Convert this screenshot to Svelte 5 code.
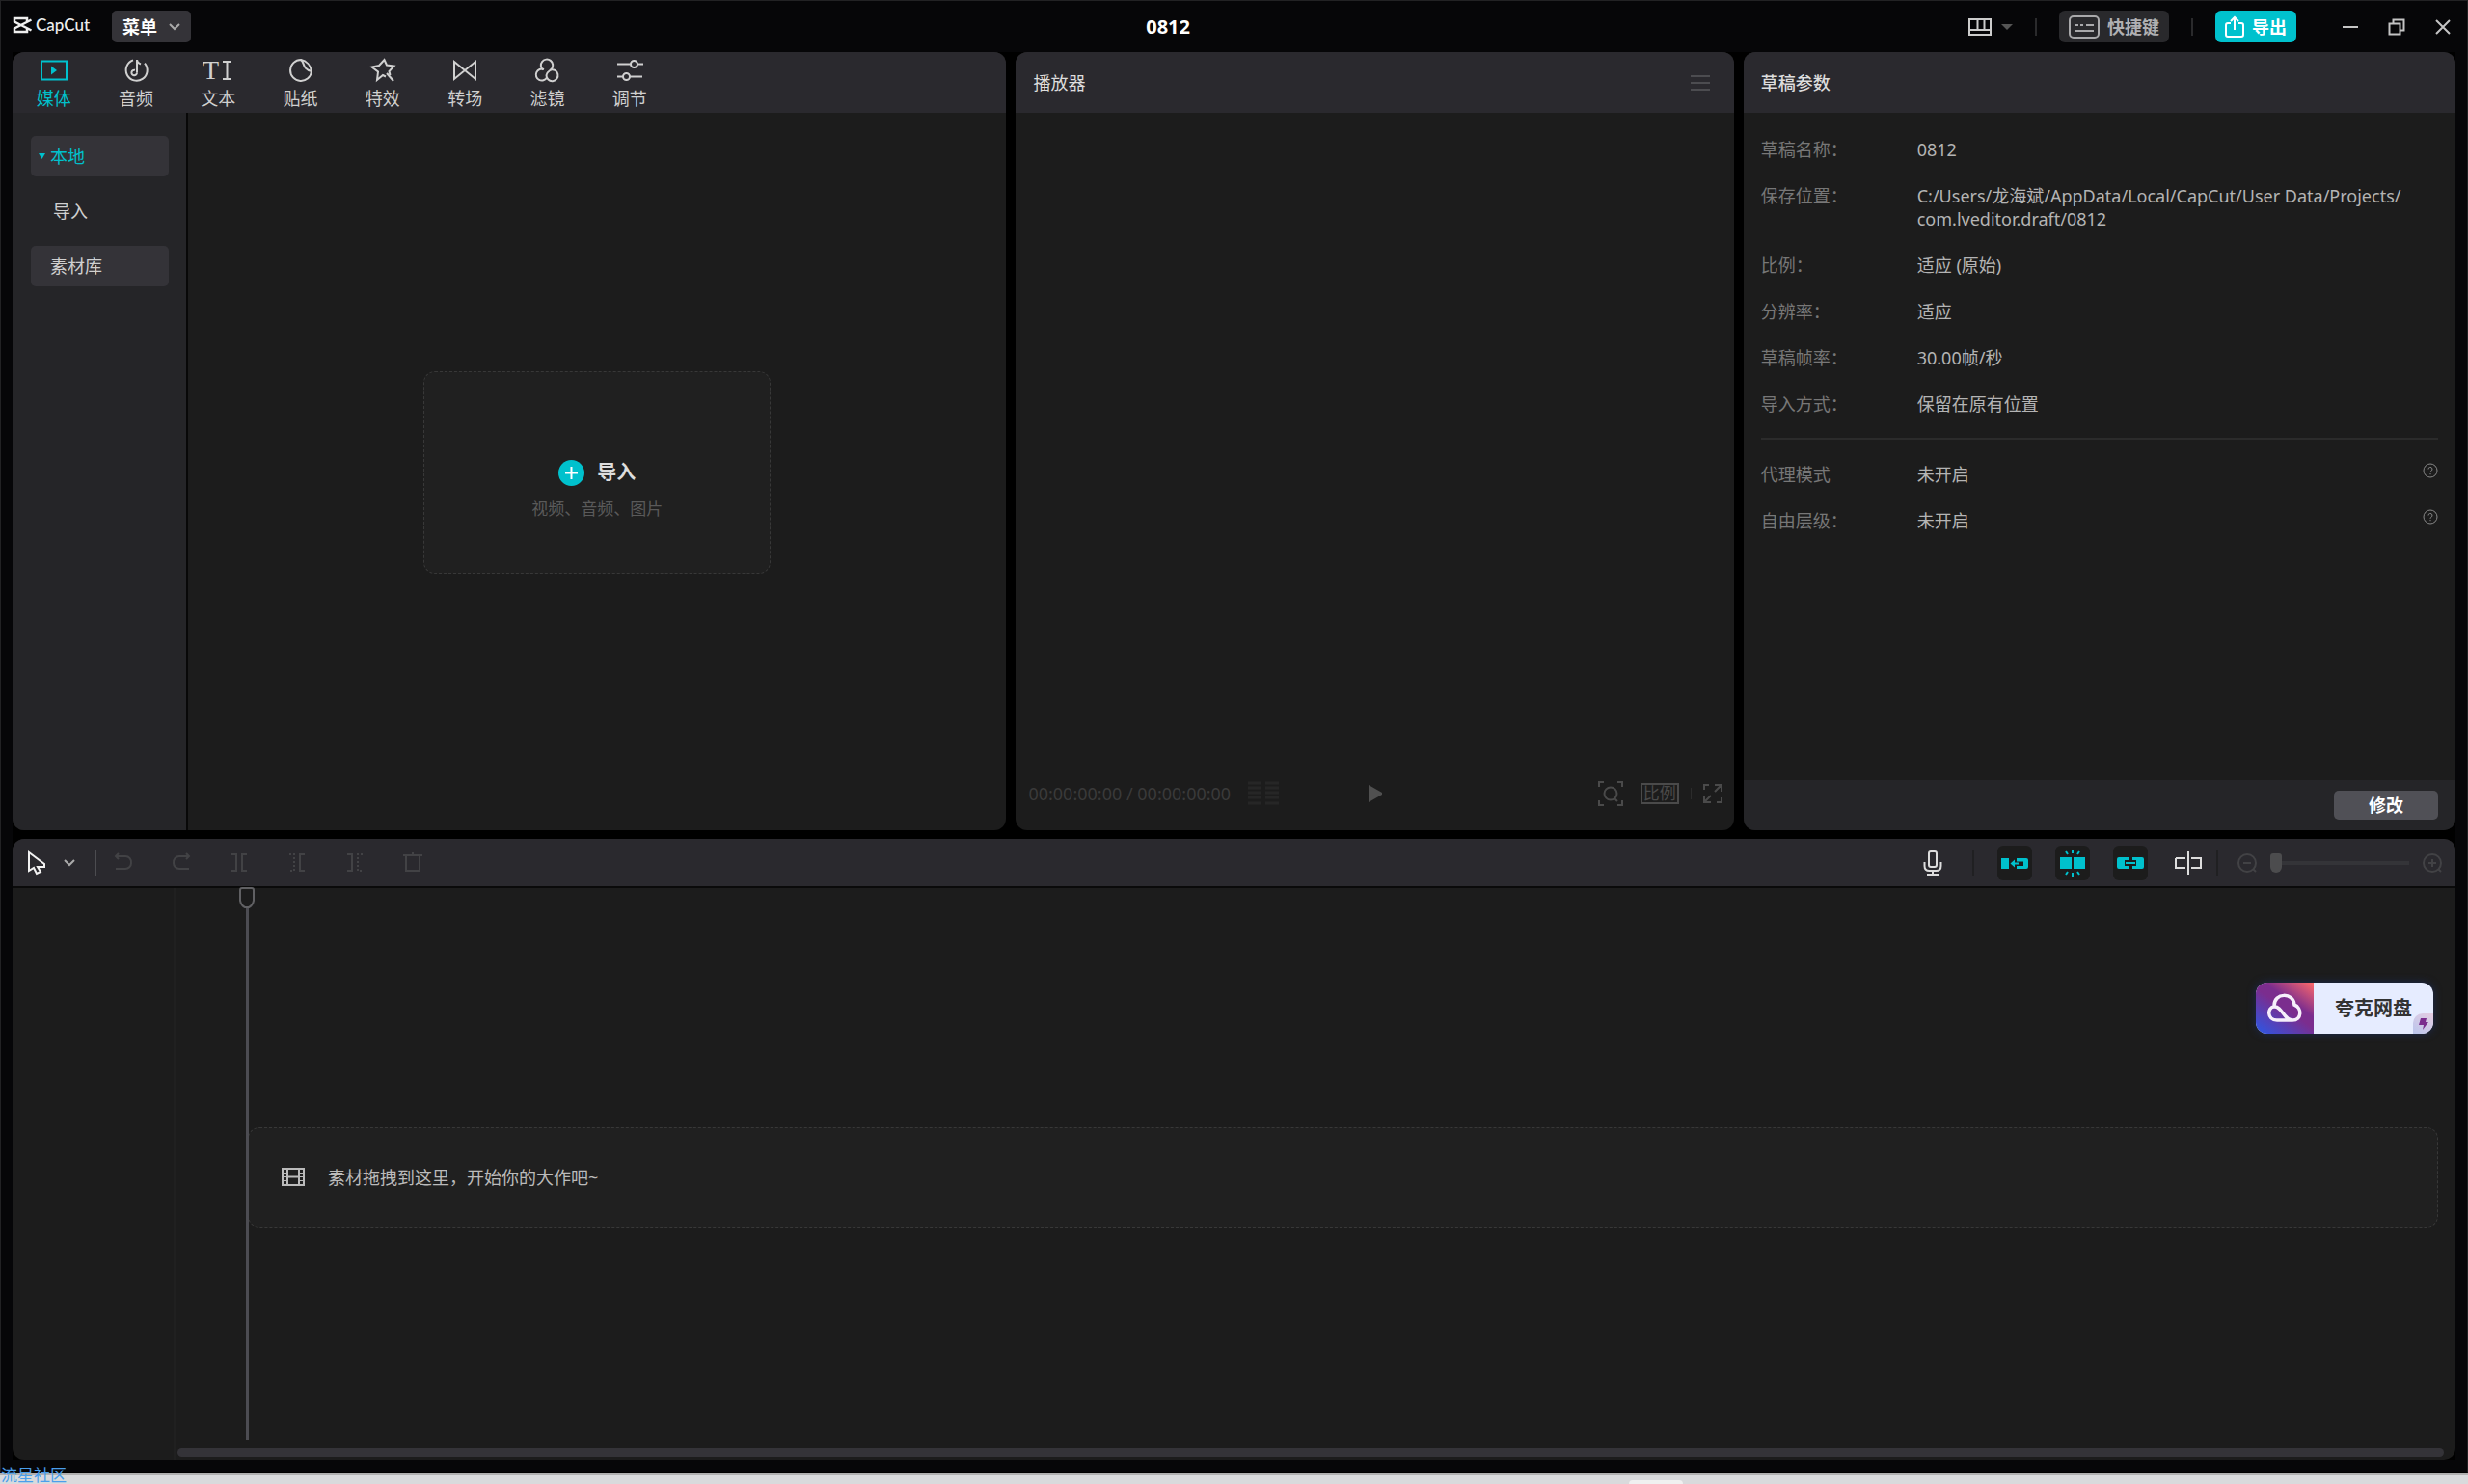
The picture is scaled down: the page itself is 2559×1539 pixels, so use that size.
<script lang="ts">
  let activeTab = $state("媒体");
  let zoom = $state(0);

  const tabs = [
    {name: "媒体", paths: ["M1 2.5h26v19H1z"], fill: "M11 7.5l6 4.5-6 4.5z"},
    {name: "音频", paths: ["M11 1.4A11 11 0 1 0 23 4.6", "M15 14.6V1c0 3 1.5 3.5 4 4.5", "M15 14.5a2.8 2.8 0 1 1-2-2.7"]},
    {name: "文本", paths: ["M21 3h9M21 21h9M25.5 3v18"]},
    {name: "贴纸", paths: ["M14 1A11 11 0 1 0 25 13C24 7 20 2 14 1z", "M14 1c4 2 1 10 11 12"]},
    {name: "特效", paths: ["M17 18.5l-3-1.5-6 5 1-8.500-6.500-5 7.500-1.500L15.500 1l2.500 5.500 7.500 1-5 5.500 1 4", "M18 15l7 8"]},
    {name: "转场", paths: ["M3 3l22 18V3L3 21z"]},
    {name: "滤镜", paths: ["M10 11.500a6.200 6.200 0 1 1 9-1c-1.500 2-5 2.500-5.500 6.500", "M11 11a6 6 0 1 0 3 8.500M17.500 11.500a6 6 0 1 1-4 5.500"]},
    {name: "调节", paths: ["M1 5.500h14M22 5.500h6M1 18.500h6M14 18.500h13", "M15 5.500a3.500 3.500 0 1 0 7 0 3.500 3.500 0 1 0-7 0M7 18.500a3.500 3.500 0 1 0 7 0 3.500 3.500 0 1 0-7 0"]}
  ];

  const params = [
    {label: "草稿名称：", value: "0812"},
    {label: "保存位置：", value: "C:/Users/龙海斌/AppData/Local/CapCut/User Data/Projects/\ncom.lveditor.draft/0812"},
    {label: "比例：", value: "适应 (原始)"},
    {label: "分辨率：", value: "适应"},
    {label: "草稿帧率：", value: "30.00帧/秒"},
    {label: "导入方式：", value: "保留在原有位置"}
  ];

  const modes = [
    {label: "代理模式", value: "未开启"},
    {label: "自由层级：", value: "未开启"}
  ];

  const tools = [
    {name: "撤销", d: "M5 1L2 4l3 3M2 4h10a6 6 0 0 1 6 7 6 6 0 0 1-6 6H2"},
    {name: "恢复", d: "M15 1l3 3-3 3M18 4H8a6 6 0 0 0-6 7 6 6 0 0 0 6 6h10"},
    {name: "分割", d: "M2 2h5v17H2M18 2h-5v17h5"},
    {name: "向左裁剪", d: "M18 2h-5v17h5", dash: "M2 2h5v17H2"},
    {name: "向右裁剪", d: "M2 2h5v17H2", dash: "M18 2h-5v17h5"},
    {name: "删除", d: "M0 3h20M10 0v3M3 3v16h14V3"}
  ];
</script>

<div class="window">
  <header class="titlebar">
    <div class="brand">
      <svg width="20" height="18" viewBox="0 0 20 18" fill="none" stroke="#eee" stroke-width="2.500">
        <path d="M15 5V2H2v3.500l17.500 9M15 13v3H2v-3.500l17.500-9"/>
      </svg>
      <span>CapCut</span>
    </div>
    <button class="menu">
      菜单
      <svg width="12" height="8" viewBox="0 0 12 8" fill="none" stroke="#aaa" stroke-width="2"><path d="M1 1l5 5 5-5"/></svg>
    </button>
    <h1>0812</h1>
    <button class="plain layout" aria-label="布局">
      <svg width="24" height="18" viewBox="0 0 24 18" fill="none" stroke="#ccc" stroke-width="2"><path d="M1 1h22v16H1zM1 12h22M9.500 1v11M16.500 1v11"/></svg>
      <svg width="12" height="6" viewBox="0 0 12 6" fill="#555"><path d="M0 0h12L6 6z"/></svg>
    </button>
    <i class="bar-sep"></i>
    <button class="hotkeys">
      <svg width="32" height="24" viewBox="0 0 32 24" fill="none" stroke="#a9a9ab" stroke-width="2"><rect x="1" y="1" width="30" height="22" rx="4"/><path d="M6 10h4M12 10h3M18 10h8M6 16h20"/></svg>
      快捷键
    </button>
    <i class="bar-sep"></i>
    <button class="export">
      <svg width="20" height="22" viewBox="0 0 20 22" fill="none" stroke="#fff" stroke-width="2"><path d="M6 7H3a2 2 0 0 0-2 2v10a2 2 0 0 0 2 2h14a2 2 0 0 0 2-2V9a2 2 0 0 0-2-2h-3M10 14V2M6 5l4-4 4 4"/></svg>
      导出
    </button>
    <div class="win-buttons">
      <button class="plain" aria-label="最小化"><svg width="18" height="18" viewBox="0 0 18 18"><path d="M1 9h16"/></svg></button>
      <button class="plain" aria-label="还原"><svg width="18" height="18" viewBox="0 0 18 18"><path d="M1.500 5.500h11v11h-11zM5.500 5V1.500h11v11H13"/></svg></button>
      <button class="plain" aria-label="关闭"><svg width="18" height="18" viewBox="0 0 18 18"><path d="M2 2l14 14M16 2L2 16"/></svg></button>
    </div>
  </header>

  <main>
    <div class="top">
      <section class="panel">
        <nav class="panel-head tabs">
          {#each tabs as tab}
            <button class="tab" class:active={tab.name === activeTab} onclick={() => activeTab = tab.name}>
              <svg width={tab.name === "文本" ? 32 : 28} height="24" viewBox={tab.name === "文本" ? "0 0 32 24" : "0 0 28 24"}>
                {#if tab.name === "文本"}
                  <text x="0" y="21">T</text>
                {/if}
                {#each tab.paths as d}
                  <path {d}/>
                {/each}
                {#if tab.fill}
                  <path class="solid" d={tab.fill}/>
                {/if}
              </svg>
              {tab.name}
            </button>
          {/each}
        </nav>
        <div class="library">
          <aside>
            <button class="side active">
              <svg width="7" height="6" viewBox="0 0 7 6" fill="#00c1cd"><path d="M0 0h7L3.500 6z"/></svg>
              本地
            </button>
            <button class="side child">导入</button>
            <button class="side">素材库</button>
          </aside>
          <div class="media">
            <button class="import">
              <span class="import-title">
                <svg width="27" height="27" viewBox="0 0 27 27" fill="none" stroke="#fff" stroke-width="2"><circle cx="13.500" cy="13.500" r="13.500" fill="#00c1cd" stroke="none"/><path d="M7 13.500h13M13.500 7v13"/></svg>
                导入
              </span>
              <span class="import-hint">视频、音频、图片</span>
            </button>
          </div>
        </div>
      </section>

      <section class="panel player">
        <div class="panel-head">
          <h2>播放器</h2>
          <button class="plain" aria-label="播放器菜单">
            <svg width="20" height="18" viewBox="0 0 20 18" stroke="#4c4c50" stroke-width="2"><path d="M0 2h20M0 9h20M0 16h20"/></svg>
          </button>
        </div>
        <div class="screen"></div>
        <div class="controls">
          <div class="time">
            <span>00:00:00:00 / 00:00:00:00</span>
            <svg width="32" height="26" viewBox="0 0 32 26" stroke="#262626" stroke-width="3"><path d="M0 2h14M0 7h14M0 12h14M0 17h14M0 23h14M18 2h14M18 7h14M18 12h14M18 17h14M18 23h14"/></svg>
          </div>
          <button class="plain" aria-label="播放">
            <svg width="16" height="18" viewBox="0 0 16 18" fill="#505050"><path d="M1 0l14 8v2L1 18z"/></svg>
          </button>
          <div class="view">
            <button class="plain" aria-label="缩放">
              <svg width="26" height="26" viewBox="0 0 26 26" fill="none" stroke="#4a4a4a" stroke-width="2"><path d="M1 6V1h5M20 1h5v5M25 20v5h-5M6 25H1v-5M17 18l3 3"/><circle cx="13" cy="13" r="6.500"/></svg>
            </button>
            <button class="ratio">比例</button>
            <i></i>
            <button class="plain" aria-label="全屏">
              <svg width="20" height="20" viewBox="0 0 20 20" fill="none" stroke="#4a4a4a" stroke-width="2"><path d="M1 6V1h5M12 1h7v7M19 14v5h-5M8 19H1v-7M18 2l-6 6M2 18l6-6"/></svg>
            </button>
          </div>
        </div>
      </section>

      <section class="panel">
        <div class="panel-head"><h2 class="strong">草稿参数</h2></div>
        <div class="params">
          <dl>
            {#each params as row}
              <div class="row"><dt>{row.label}</dt><dd>{row.value}</dd></div>
            {/each}
          </dl>
          <dl class="modes">
            {#each modes as row}
              <div class="row">
                <dt>{row.label}</dt><dd>{row.value}</dd>
                <button class="plain help" aria-label="帮助">
                  <svg width="16" height="16" viewBox="0 0 16 16" fill="none" stroke="#888"><circle cx="8" cy="8" r="7"/><path d="M6 6.500a2 2 0 1 1 2.800 1.800Q8 8.700 8 9.800M8 11v1.200"/></svg>
                </button>
              </div>
            {/each}
          </dl>
        </div>
        <footer><button class="edit">修改</button></footer>
      </section>
    </div>

    <section class="panel timeline">
      <div class="toolbar">
        <button class="plain pointer" aria-label="选择">
          <svg width="20" height="26" viewBox="0 0 20 26" fill="none" stroke="#f2f2f2" stroke-width="2"><path d="M2 2v19l5-3 3 6 4-2-3-5h7v-3z"/></svg>
          <svg width="12" height="8" viewBox="0 0 12 8" fill="none" stroke="#aaa" stroke-width="2"><path d="M1 1l5 5 5-5"/></svg>
        </button>
        <i class="light"></i>
        {#each tools as tool}
          <button class="plain tool" aria-label={tool.name} disabled>
            <svg width="20" height="21" viewBox="0 0 20 21" fill="none" stroke="#424245" stroke-width="2">
              <path d={tool.d}/>
              {#if tool.dash}<path d={tool.dash} stroke-dasharray="2 2"/>{/if}
            </svg>
          </button>
        {/each}
        <div class="right-tools">
          <button class="plain mic" aria-label="录音">
            <svg width="20" height="26" viewBox="0 0 20 26" fill="none" stroke="#ddd" stroke-width="2"><rect x="6" y="1" width="8" height="16" rx="2"/><path d="M1.500 12v4q0 5 5 5h7q5 0 5-5v-4M10 21v4M4 25h12"/></svg>
          </button>
          <i></i>
          <div class="toggles">
            <button class="toggle" aria-label="主轨磁吸">
              <svg width="28" height="12" viewBox="0 0 28 12" fill="#00c1cd"><path d="M0 1h8v11H0zM16 1h10q2 0 2 2v7q0 2-2 2H16V9h7V4.500h-7zM14 2.500v8L9.500 6.500z"/><path d="M14 5.500h4v2h-4z"/></svg>
            </button>
            <button class="toggle" aria-label="自动吸附">
              <svg width="28" height="30" viewBox="0 0 28 30" fill="#00c1cd"><path d="M1 9h12v12H1zM15 9h12v12H15z"/><path d="M14 1v4M14 25v4M7 3l2 3M21 3l-2 3M7 27l2-3M21 27l-2-3" stroke="#00c1cd" stroke-width="2"/></svg>
            </button>
            <button class="toggle" aria-label="联动">
              <svg width="28" height="12" viewBox="0 0 28 12" fill="#00c1cd"><path d="M2 0h10v3H8v6h4v3H2q-2 0-2-2V2q0-2 2-2zM26 0H16v3h4v6h-4v3h10q2 0 2-2V2q0-2-2-2z"/><path d="M9 5h10v2H9z"/></svg>
            </button>
          </div>
          <button class="plain" aria-label="预览轴">
            <svg width="28" height="24" viewBox="0 0 28 24" fill="none" stroke="#ddd" stroke-width="2"><path d="M14 0v24M1 7h10M11 17H1V7M17 7h10v10H17"/></svg>
          </button>
          <i></i>
          <div class="zoom">
            <button class="plain" aria-label="缩小"><svg width="20" height="20" viewBox="0 0 20 20" fill="none" stroke="#424245" stroke-width="2"><circle cx="10" cy="10" r="9"/><path d="M6 10h8M16 16l3 3"/></svg></button>
            <input type="range" min="0" max="100" bind:value={zoom} aria-label="时间线缩放"/>
            <button class="plain" aria-label="放大"><svg width="20" height="20" viewBox="0 0 20 20" fill="none" stroke="#424245" stroke-width="2"><circle cx="10" cy="10" r="9"/><path d="M6 10h8M10 6v8M16 16l3 3"/></svg></button>
          </div>
        </div>
      </div>
      <div class="tracks">
        <div class="playhead">
          <svg width="16" height="22" viewBox="0 0 16 22" fill="#1c1c1c" stroke="#606063" stroke-width="2"><path d="M1 2q0-2 2-2h10q2 0 2 2v11q-1 5-5 7H6q-4-2-5-7z"/></svg>
        </div>
        <div class="dropzone">
          <svg width="24" height="19" viewBox="0 0 24 19" fill="none" stroke="#bbb" stroke-width="2"><path d="M1 1h22v17H1zM6 1v17M18 1v17M6 9.500h12"/><path d="M1 5.500h5M1 9.500h5M1 13.500h5M18 5.500h5M18 9.500h5M18 13.500h5" stroke-width="1"/></svg>
          素材拖拽到这里，开始你的大作吧~
        </div>
        <div class="scrollbar"></div>
        <button class="quark">
          <span class="quark-logo">
            <svg width="36" height="29" viewBox="0 0 36 29" fill="none" stroke="#f6effa" stroke-width="3.500"><path d="M7 12C7-2 27-2 28 11c8 3 8 16-2 16H10C-1 27 0 13 7 13c8-1 10 14 19 14"/></svg>
          </span>
          <span class="quark-name">夸克网盘</span>
          <span class="quark-badge">
            <svg width="10" height="12" viewBox="0 0 10 12" fill="#7b2d8e"><path d="M2 0h6L7 4h3L4 12l1-5H0z"/></svg>
          </span>
        </button>
      </div>
    </section>
  </main>
</div>
<div class="desktop">
  <div class="taskbar"></div>
  <span class="watermark">流星社区</span>
</div>

<style>
  :global(body) {
    margin: 0;
    background: #d9dadc;
  }
  :global(#app) {
    height: 100vh;
    display: flex;
    flex-direction: column;
    overflow: hidden;
    font-family: "Noto Sans", "Noto Sans CJK SC", sans-serif;
    font-size: 18px;
    line-height: 24px;
    color: #d0d0d0;
  }
  svg {
    display: block;
    flex: none;
    overflow: visible;
  }
  button {
    font: inherit;
    color: inherit;
    border: none;
    padding: 0;
    background: none;
    display: flex;
    align-items: center;
  }
  h1, h2, dl, dd {
    margin: 0;
  }
  .window {
    flex: 1;
    min-height: 0;
    display: flex;
    flex-direction: column;
    box-sizing: border-box;
    padding: 0 12px 13px;
    background: #060608;
    border: 1px solid #222224;
    border-bottom-color: #000;
  }

  .titlebar {
    height: 53px;
    flex: none;
    display: flex;
    align-items: center;
    position: relative;
  }
  .brand {
    display: flex;
    align-items: center;
    gap: 4px;
    width: 103px;
    padding-bottom: 3px;
    font: 500 17px/24px Lato, sans-serif;
    color: #eee;
  }
  .menu {
    height: 33px;
    width: 82px;
    justify-content: center;
    gap: 12px;
    border-radius: 5px;
    background: #343338;
    color: #fff;
    font-weight: bold;
  }
  h1 {
    position: absolute;
    left: 0;
    width: 94.6%;
    text-align: center;
    font-size: 20px;
    color: #fff;
    pointer-events: none;
  }
  .layout {
    margin-left: auto;
    gap: 10px;
  }
  .bar-sep {
    width: 2px;
    height: 18px;
    margin: 0 23px;
    background: #2a2a2c;
  }
  .hotkeys,
  .export {
    height: 33px;
    border-radius: 6px;
    font-weight: bold;
  }
  .hotkeys {
    width: 114px;
    justify-content: center;
    gap: 8px;
    background: #29292c;
    color: #b0b0b2;
  }
  .export {
    width: 84px;
    justify-content: center;
    gap: 8px;
    background: #00c1cd;
    color: #fff;
  }
  .win-buttons {
    display: flex;
    gap: 30px;
    margin: 0 4px 0 47px;
  }
  .win-buttons svg {
    fill: none;
    stroke: #c4c4c4;
    stroke-width: 2;
  }

  main {
    flex: 1;
    min-height: 0;
    display: flex;
    flex-direction: column;
    gap: 9px;
    background: #000;
  }
  .top {
    flex: 807 0 0;
    min-height: 0;
    display: grid;
    grid-template-columns: 1030fr 744fr 738fr;
    gap: 10px;
  }
  .panel {
    display: flex;
    flex-direction: column;
    min-width: 0;
    border-radius: 12px;
    overflow: hidden;
    background: #1c1c1c;
  }
  .panel-head {
    height: 63px;
    flex: none;
    display: flex;
    align-items: center;
    justify-content: space-between;
    box-sizing: border-box;
    padding: 0 25px 0 18px;
    background: #2a292e;
  }
  h2 {
    font-size: 18px;
    font-weight: normal;
    color: #ddd;
  }
  .strong {
    font-weight: 500;
  }
  .panel-head.tabs {
    display: grid;
    grid-template-columns: repeat(8, 1fr);
    padding: 4px 348px 0 0;
  }
  .tab {
    flex-direction: column;
    gap: 5px;
  }
  .tab svg {
    fill: none;
    stroke: currentColor;
    stroke-width: 2;
  }
  .tab text {
    font: 28px "Liberation Serif", serif;
    fill: currentColor;
    stroke: none;
  }
  .tab .solid {
    fill: currentColor;
    stroke: none;
  }
  .active {
    color: #00c1cd;
  }
  .library {
    flex: 1;
    display: flex;
  }
  aside {
    width: 143px;
    padding: 24px 18px 0 19px;
    display: flex;
    flex-direction: column;
    gap: 15px;
    background: #252528;
    border-right: 2px solid #080808;
  }
  .side {
    height: 42px;
    padding-left: 20px;
    border-radius: 5px;
    background: #343338;
  }
  .side.active {
    padding-left: 8px;
    gap: 5px;
  }
  .side.child {
    padding-left: 23px;
    background: none;
  }
  .media {
    flex: 1;
    display: flex;
    align-items: center;
    justify-content: center;
    padding-top: 2px;
  }
  .import {
    width: 360px;
    height: 210px;
    box-sizing: border-box;
    flex-direction: column;
    justify-content: center;
    gap: 12px;
    padding-top: 36px;
    border: 1px dashed #383838;
    border-radius: 12px;
    background: #202020;
  }
  .import-title {
    display: flex;
    align-items: center;
    gap: 13px;
    font-size: 20px;
    font-weight: bold;
    color: #ddd;
  }
  .import-hint {
    font-size: 17px;
    color: #5a5a5a;
  }

  .screen {
    flex: 1;
  }
  .controls {
    display: grid;
    grid-template-columns: 1fr auto 1fr;
    align-items: center;
    height: 26px;
    padding: 0 12px 25px 13px;
    color: #3a3a3a;
  }
  .time,
  .view {
    display: flex;
    align-items: center;
    gap: 18px;
  }
  .view {
    justify-content: flex-end;
  }
  .view i {
    width: 1px;
    height: 12px;
    margin: 0 -6px;
    background: #2c2c2c;
  }
  .ratio {
    height: 22px;
    padding: 0 1px;
    border: 2px solid #4a4a4a;
    font-size: 17px;
    box-sizing: border-box;
    color: #4a4a4a;
  }

  .params {
    flex: 1;
    padding: 26px 18px 0;
  }
  .row {
    display: flex;
    margin-bottom: 24px;
  }
  dt {
    width: 162px;
    flex: none;
    color: #777;
  }
  dd {
    flex: 1;
    white-space: pre-line;
    color: #b4b4b4;
  }
  .modes {
    border-top: 2px solid #2b2b2b;
    padding-top: 24px;
    margin-top: -1px;
  }
  .help {
    align-self: flex-start;
  }
  footer {
    height: 52px;
    flex: none;
    display: flex;
    align-items: center;
    justify-content: flex-end;
    padding-right: 18px;
    background: #252528;
  }
  .edit {
    width: 108px;
    height: 30px;
    justify-content: center;
    border-radius: 5px;
    background: #505056;
    font-weight: bold;
    color: #fff;
  }

  .timeline {
    flex: 644 0 0;
    min-height: 0;
  }
  .toolbar {
    height: 49px;
    flex: none;
    display: flex;
    align-items: center;
    padding: 0 14px 0 15px;
    background: #2a292e;
    border-bottom: 2px solid #0a0a0a;
  }
  .pointer {
    gap: 18px;
  }
  .toolbar i {
    width: 2px;
    height: 26px;
    background: #202022;
  }
  .toolbar i.light {
    margin: 0 0 0 20px;
    background: #4c4c50;
  }
  .tool {
    width: 60px;
    box-sizing: border-box;
    padding-right: 5px;
    justify-content: center;
  }
  .right-tools {
    margin-left: auto;
    display: flex;
    align-items: center;
  }
  .mic {
    margin-right: 31px;
  }
  .toggles {
    display: flex;
    gap: 24px;
    margin: 0 28px 0 24px;
  }
  .toggle {
    width: 36px;
    height: 36px;
    justify-content: center;
    border-radius: 6px;
    background: #1c1c1c;
  }
  .zoom {
    display: flex;
    align-items: center;
    gap: 14px;
    margin-left: 20px;
  }
  .right-tools > .plain:not(.mic) {
    margin-right: 15px;
  }
  .zoom input {
    appearance: none;
    width: 144px;
    height: 20px;
    margin: 0;
    background: linear-gradient(#343438, #343438) center / 100% 4px no-repeat;
  }
  .zoom input::-webkit-slider-thumb {
    appearance: none;
    width: 12px;
    height: 20px;
    border-radius: 3px 3px 6px 6px;
    background: #4c4c4e;
  }

  .tracks {
    flex: 1;
    display: flex;
    flex-direction: column;
    position: relative;
    padding: 18px 12px 3px 171px;
    background: linear-gradient(90deg, transparent 167px, #202020 167px, #202020 169px, transparent 169px);
  }
  .dropzone {
    height: 104px;
    box-sizing: border-box;
    margin: auto 6px auto 73px;
    display: flex;
    align-items: center;
    gap: 24px;
    padding-left: 34px;
    border: 1px dashed #383838;
    border-radius: 12px;
    background: #202020;
    color: #bbb;
  }
  .scrollbar {
    height: 9px;
    border-radius: 5px;
    background: #343338;
  }
  .playhead {
    position: absolute;
    top: 0;
    bottom: 21px;
    left: 235px;
    width: 16px;
    background: linear-gradient(#4c4c52, #4c4c52) center / 3px 100% no-repeat;
  }
  .quark {
    position: absolute;
    top: 98px;
    right: 23px;
    width: 184px;
    height: 53px;
    border-radius: 12px;
    overflow: hidden;
    background: #e6ecff;
    align-items: stretch;
    box-shadow: 0 0 8px #1c2a50;
  }
  .quark-logo {
    width: 60px;
    display: flex;
    align-items: center;
    justify-content: center;
    background: linear-gradient(35deg, #2a58e8, #7b2d8e 50%, #7b2d8e 62%, #ff6a6a);
  }
  .quark-name {
    flex: 1;
    line-height: 53px;
    font-size: 20px;
    font-weight: bold;
    color: #333;
  }
  .quark-badge {
    position: absolute;
    right: 0;
    bottom: 0;
    width: 21px;
    height: 21px;
    display: flex;
    align-items: center;
    justify-content: center;
    border-radius: 10px 0 0 0;
    background: linear-gradient(35deg, #b9c5ec, #e6cde2);
  }

  .desktop {
    height: 11px;
    box-sizing: border-box;
    position: relative;
    border-top: 2px solid #b0b0b0;
    background: #d9dadc;
  }
  .taskbar {
    width: 56px;
    height: 4px;
    margin: 5px 0 0 66%;
    border-radius: 4px 4px 0 0;
    background: #f0f0f0;
  }
  .watermark {
    position: absolute;
    left: 1px;
    bottom: 1px;
    font-size: 17px;
    line-height: 17px;
    color: #4a9fec;
  }
</style>
